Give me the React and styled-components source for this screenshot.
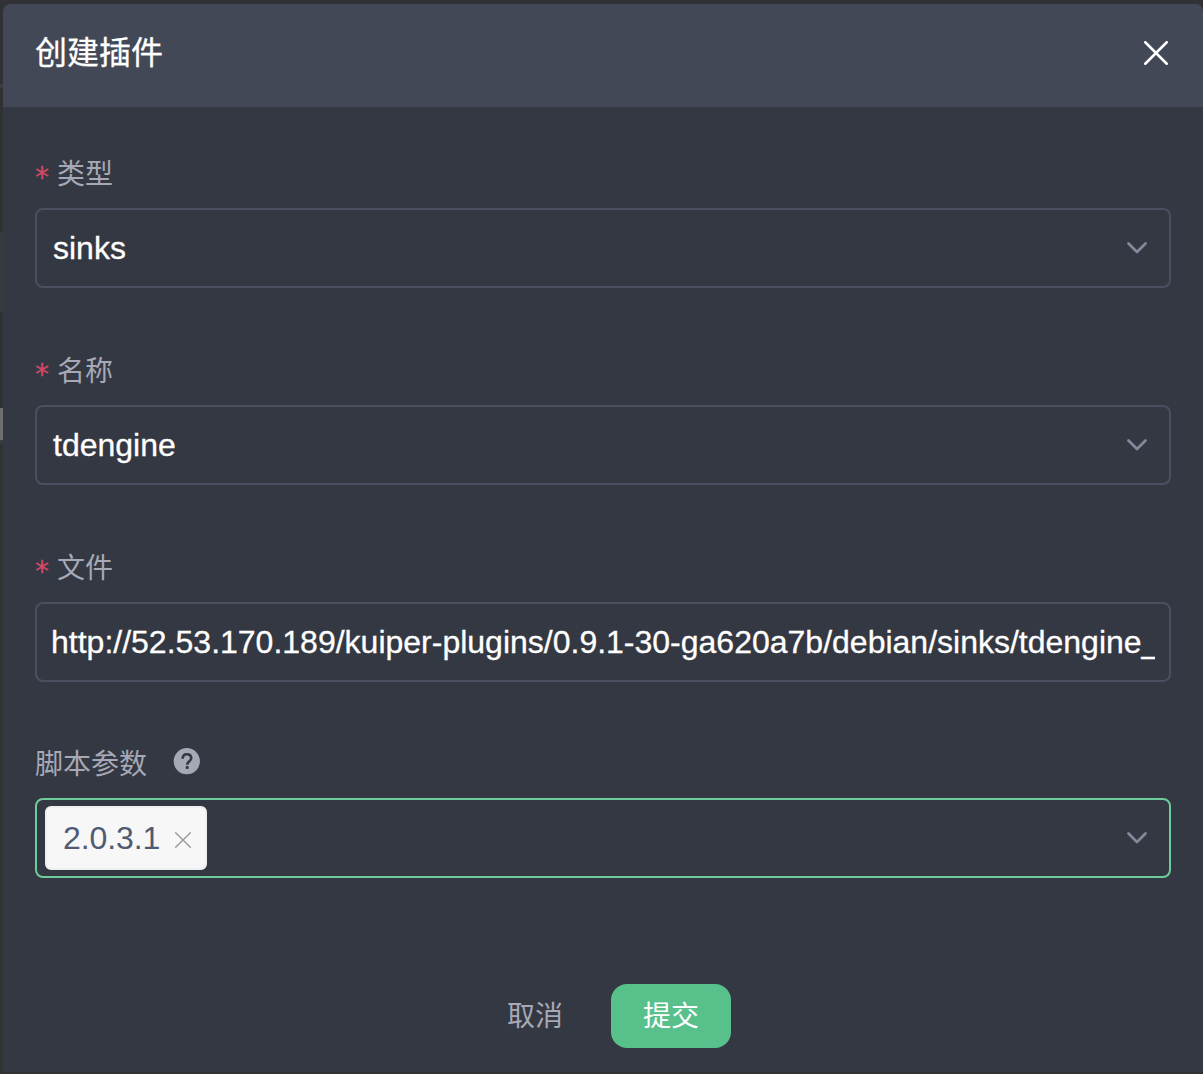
import React from "react";
import styled, { createGlobalStyle } from "styled-components";

const GlobalStyle = createGlobalStyle`
  * { box-sizing: border-box; }
  body {
    margin: 0;
    background: #313236;
    font-family: "Liberation Sans", "Noto Sans CJK SC", sans-serif;
  }
  button, input { font-family: inherit; }
`;

const Page = styled.div`
  display: flex;
  width: 1203px;
  height: 1074px;
  overflow: hidden;
  background: #313236;
`;

const Backdrop = styled.div`
  display: flex;
  flex-direction: column;
  flex: none;
  width: 3px;
  background: #313234;
`;

const BackdropStrip = styled.div`
  flex: none;
  height: ${(p) => p.$height}px;
  background: ${(p) => p.$color};
`;

const Dialog = styled.section`
  display: flex;
  flex-direction: column;
  flex: none;
  width: 1200px;
  height: 1068px;
  margin-top: 4px;
  overflow: hidden;
  border-radius: 8px 8px 0 0;
  background: #343842;
`;

const Header = styled.header`
  display: flex;
  align-items: center;
  justify-content: space-between;
  flex: none;
  height: 103px;
  padding: 0 35px 5px 32px;
  background: #434856;
`;

const Title = styled.h1`
  margin: 0;
  color: #fff;
  font-size: 32px;
  font-weight: 400;
  line-height: 48px;
  -webkit-text-stroke: 0.3px currentColor;
`;

const IconButton = styled.button`
  display: flex;
  flex: none;
  padding: 0;
  border: 0;
  background: none;
  color: ${(p) => p.$color};
`;

const RemoveButton = styled(IconButton)`
  margin-top: 3px;
`;

const Form = styled.form`
  display: flex;
  flex-direction: column;
  padding: 48px 32px 0;
`;

const Field = styled.div`
  display: flex;
  flex-direction: column;
  height: ${(p) => p.$height || 197}px;
`;

const Label = styled.label`
  display: flex;
  align-items: center;
  flex: none;
  height: 40px;
  margin-bottom: 13px;
  color: #a6a8b5;
  font-size: 28px;
  line-height: 40px;
`;

const Required = styled.span`
  width: 22px;
  color: #d04a68;
  font-family: "DejaVu Sans", sans-serif;
  font-size: 28px;
  line-height: 40px;
  padding-top: 6px;
  -webkit-text-stroke: 0.3px currentColor;
`;

const Help = styled.svg`
  margin: -7px 0 0 26px;
`;

const Control = styled.div`
  display: flex;
  align-items: center;
  justify-content: space-between;
  flex: none;
  height: 80px;
  padding: ${(p) => p.$padding || "0 21px 0 16px"};
  border: 2px solid ${(p) => (p.$active ? "#6ecb9c" : "#4a5060")};
  border-radius: 8px;
  color: #fff;
  font-size: 32px;
`;

const Value = styled.span`
  line-height: 40px;
  -webkit-text-stroke: 0.3px currentColor;
`;

const TextInput = styled.input`
  width: 100%;
  padding: 0;
  border: 0;
  outline: 0;
  background: none;
  color: #fff;
  font-size: 32px;
  line-height: 40px;
  -webkit-text-stroke: 0.3px currentColor;
`;

const Tag = styled.span`
  display: flex;
  align-items: center;
  width: 162px;
  height: 64px;
  padding: 0 14px 0 16px;
  justify-content: space-between;
  border: 2px solid #efeff1;
  border-radius: 6px;
  background: #f7f7f7;
  color: #505a73;
  letter-spacing: -0.1px;
`;

const Actions = styled.footer`
  display: flex;
  align-items: center;
  justify-content: center;
  gap: 16px;
  margin-top: 83px;
`;

const ActionButton = styled.button`
  width: 120px;
  height: 64px;
  padding: 2px 0 0;
  border: 0;
  border-radius: 16px;
  background: ${(p) => (p.$primary ? "#58c08b" : "none")};
  color: ${(p) => (p.$primary ? "#fff" : "#a6a8b5")};
  font-size: 28px;
  line-height: 62px;
`;

const Chevron = () => (
  <svg width="22" height="14" viewBox="0 0 22 14" fill="none" stroke="#83889a" strokeWidth="2.8" strokeLinecap="round" strokeLinejoin="round">
    <path d="M2.5 2.5 11 11l8.5-8.5" />
  </svg>
);

const Cross = ({ size, stroke }) => (
  <svg width={size} height={size} viewBox={`0 0 ${size} ${size}`} fill="none" stroke="currentColor" strokeWidth={stroke} strokeLinecap="round">
    <path d={`M${stroke / 2} ${stroke / 2} ${size - stroke / 2} ${size - stroke / 2}M${size - stroke / 2} ${stroke / 2} ${stroke / 2} ${size - stroke / 2}`} />
  </svg>
);

const HelpIcon = () => (
  <Help width="27" height="27" viewBox="0 0 27 27" fill="none">
    <circle cx="13.8" cy="13.2" r="13.1" fill="#a6a8b5" />
    <path d="M9.6 10.7c.1-3 1.7-4.4 4.3-4.4s4.3 1.5 4.3 3.9c0 3-4 3.2-4 6.6" stroke="#343842" strokeWidth="2.6" />
    <rect x="12.8" y="18" width="2.8" height="2.9" fill="#343842" />
  </Help>
);

const selects = [
  { label: "类型", value: "sinks" },
  { label: "名称", value: "tdengine" },
];

export default function App() {
  return (
    <>
      <GlobalStyle />
      <Page>
        <Backdrop>
          <BackdropStrip $height={84} $color="#303134" />
          <BackdropStrip $height={4} $color="#3b3c41" />
          <BackdropStrip $height={144} $color="#303132" />
          <BackdropStrip $height={80} $color="#383a40" />
          <BackdropStrip $height={96} $color="#303134" />
          <BackdropStrip $height={32} $color="#6f6f6f" />
          <BackdropStrip $height={4} $color="#3a3b3f" />
        </Backdrop>
        <Dialog role="dialog">
          <Header>
            <Title>创建插件</Title>
            <IconButton type="button" aria-label="关闭" $color="#fff">
              <Cross size={24} stroke={2.5} />
            </IconButton>
          </Header>
          <Form>
            {selects.map(({ label, value }) => (
              <Field key={label}>
                <Label><Required>*</Required>{label}</Label>
                <Control>
                  <Value>{value}</Value>
                  <Chevron />
                </Control>
              </Field>
            ))}
            <Field $height={196}>
              <Label><Required>*</Required>文件</Label>
              <Control $padding="0 14px">
                <TextInput
                  readOnly
                  aria-label="文件"
                  value="http://52.53.170.189/kuiper-plugins/0.9.1-30-ga620a7b/debian/sinks/tdengine_"
                />
              </Control>
            </Field>
            <Field $height={156}>
              <Label>脚本参数<HelpIcon /></Label>
              <Control $active $padding="0 21px 0 8px">
                <Tag>
                  2.0.3.1
                  <RemoveButton type="button" aria-label="移除" $color="#999">
                    <Cross size={16} stroke={1.4} />
                  </RemoveButton>
                </Tag>
                <Chevron />
              </Control>
            </Field>
          </Form>
          <Actions>
            <ActionButton type="button">取消</ActionButton>
            <ActionButton type="button" $primary>提交</ActionButton>
          </Actions>
        </Dialog>
      </Page>
    </>
  );
}
